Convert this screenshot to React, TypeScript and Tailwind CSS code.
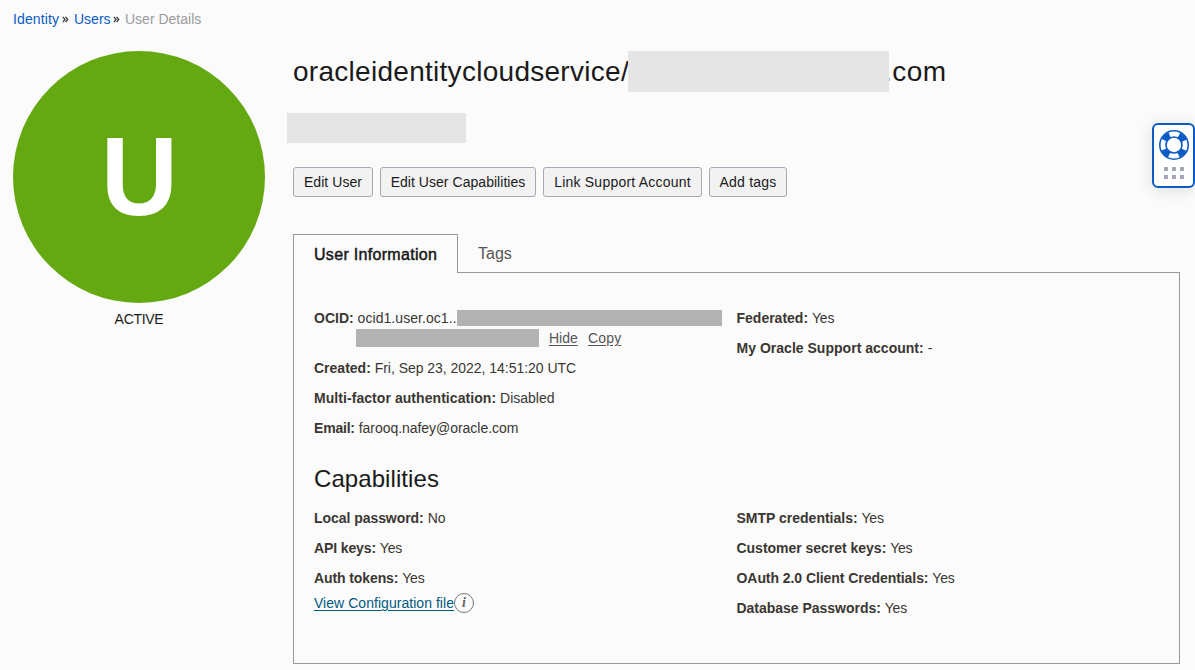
import type { ReactNode } from "react";

function Field({ label, track = "", valueTrack = "", children }: { label: string; track?: string; valueTrack?: string; children: ReactNode }) {
  return (
    <div className="h-5 whitespace-nowrap">
      <span className={"font-bold text-[#3a3632] " + track}>{label}:</span> <span className={valueTrack}>{children}</span>
    </div>
  );
}

function ActionButton({ size, children }: { size: string; children: ReactNode }) {
  return (
    <button className={"h-[30px] shrink-0 whitespace-nowrap rounded-[3px] border border-[#a3aab5] bg-[#f2f2f2] text-center text-sm leading-7 text-[#1a1a1a] " + size}>
      {children}
    </button>
  );
}

function Chevrons() {
  return (
    <svg width="7" height="7" viewBox="0 0 7 7" fill="none" stroke="#444" strokeWidth="1.4" className="shrink-0">
      <path d="M.9 .9 3 3.5.9 6.1M3.6 .9 5.7 3.5 3.6 6.1" />
    </svg>
  );
}

function Lifebuoy() {
  return (
    <svg width="32" height="32" viewBox="0 0 32 32" fill="none">
      <g stroke="#0b5cc4">
        <circle cx="16" cy="16" r="11" strokeWidth="6" strokeDasharray="7.6 9.679" strokeDashoffset="-4.84" />
        <circle cx="16" cy="16" r="14.2" strokeWidth="1.6" />
        <circle cx="16" cy="16" r="8" strokeWidth="1.6" />
      </g>
    </svg>
  );
}

function SupportWidget() {
  return (
    <aside className="absolute right-0 top-[123px] flex h-[65px] w-[43px] flex-col items-center rounded-[6px] border-2 border-[#0b5cc4] bg-white pt-1 shadow-[0_2px_16px_rgba(0,0,0,0.12)]">
      <Lifebuoy />
      <div className="mt-[6px] grid grid-cols-3 gap-1">
        {[0, 1, 2, 3, 4, 5].map((n) => (
          <span key={n} className="h-1 w-1 bg-[#a2a8b4]" />
        ))}
      </div>
    </aside>
  );
}

export default function App() {
  return (
    <div className="relative h-[670px] w-[1195px] overflow-hidden bg-[#fbfbfb] font-['Liberation_Sans',sans-serif] text-sm leading-5 text-[#3a3632]">
      <nav className="flex h-[51px] items-start whitespace-nowrap pl-[13px] pt-[9px]">
        <a className="w-[49px] tracking-[0.13px] text-[#0b5cc4]">Identity</a>
        <span className="flex h-5 w-3 items-center"><Chevrons /></span>
        <a className="w-[39px] text-[#0b5cc4]">Users</a>
        <span className="flex h-5 w-3 items-center"><Chevrons /></span>
        <span className="text-[#9b9b9b]">User Details</span>
      </nav>
      <div className="flex pl-[13px]">
        <aside className="flex w-[280px] flex-col">
          <div className="flex h-[252px] w-[252px] items-center justify-center rounded-full bg-[#65a912]">
            <span className="scale-x-[0.95] text-[112px] font-bold leading-none text-white">U</span>
          </div>
          <div className="mt-[6px] w-[252px] text-center tracking-[-0.3px] text-[#1a1a1a]">ACTIVE</div>
        </aside>
        <main className="w-[887px]">
          <h1 className="flex h-[41px] items-center whitespace-nowrap text-[28px] leading-[41px] text-[#1a1a1a]">
            <span className="w-[335px] tracking-[0.28px]">oracleidentitycloudservice/</span>
            <span className="relative z-10 h-[41px] w-[261px] bg-[#e5e5e5]" />
            <span className="-ml-[5px] tracking-[0.5px]">.com</span>
          </h1>
          <div className="-ml-[6px] mt-[21px] h-[30px] w-[179px] bg-[#e5e5e5]" />
          <div className="mt-6 flex gap-[7px]">
            <ActionButton size="w-[80px] tracking-[0.07px]">Edit User</ActionButton>
            <ActionButton size="w-[156px] tracking-[0.04px]">Edit User Capabilities</ActionButton>
            <ActionButton size="w-[159px] tracking-[0.22px]">Link Support Account</ActionButton>
            <ActionButton size="w-[78px] tracking-[0.2px]">Add tags</ActionButton>
          </div>
          <div className="mt-[37px] flex h-[39px] text-base">
            <div className="z-10 h-[39px] w-[165px] whitespace-nowrap border border-b-0 border-[#989898] bg-[#fbfbfb] pl-5 leading-[39px] tracking-[0.31px] text-[#161616] [-webkit-text-stroke:0.45px_#161616]">User Information</div>
            <div className="pl-5 leading-[39px] text-[#555]">Tags</div>
          </div>
          <section className="-mt-px h-[392px] border border-[#989898] px-5 pt-[35px]">
            <div className="flex">
              <div className="flex w-[422px] flex-col gap-[10px]">
                <div>
                  <div className="flex h-5 items-center whitespace-nowrap">
                    <span className="w-[143px]"><b>OCID:</b> <span className="tracking-[0.06px]">ocid1.user.oc1..</span></span>
                    <span className="h-4 w-[265px] bg-[#b2b2b2]" />
                  </div>
                  <div className="flex h-5 items-center pl-[42px] text-[#555]">
                    <span className="h-[18px] w-[183px] bg-[#b2b2b2]" />
                    <a className="ml-[10px] w-[39px] underline underline-offset-2">Hide</a>
                    <a className="tracking-[0.15px] underline underline-offset-2">Copy</a>
                  </div>
                </div>
                <Field label="Created" valueTrack="tracking-[-0.03px]">Fri, Sep 23, 2022, 14:51:20 UTC</Field>
                <Field label="Multi-factor authentication" track="tracking-[0.06px]">Disabled</Field>
                <Field label="Email" track="tracking-[-0.2px]" valueTrack="tracking-[-0.04px]">farooq.nafey@oracle.com</Field>
              </div>
              <div className="flex flex-col gap-[10px] pl-[0.5px]">
                <Field label="Federated" valueTrack="tracking-[-0.2px]">Yes</Field>
                <Field label="My Oracle Support account" track="tracking-[0.02px]">-</Field>
              </div>
            </div>
            <h2 className="mt-[26px] h-[30px] text-2xl leading-[30px] tracking-[0.08px] text-[#1a1a1a]">Capabilities</h2>
            <div className="mt-[14px] flex">
              <div className="flex w-[422px] flex-col gap-[10px]">
                <Field label="Local password" track="tracking-[-0.05px]">No</Field>
                <Field label="API keys" track="tracking-[-0.12px]" valueTrack="tracking-[-0.2px]">Yes</Field>
                <Field label="Auth tokens" track="tracking-[-0.1px]" valueTrack="tracking-[-0.2px]">Yes</Field>
                <div className="-mt-[5px] flex h-5 items-center">
                  <a className="w-[140px] whitespace-nowrap tracking-[0.04px] text-[#00597f] underline underline-offset-2">View Configuration file</a>
                  <span className="flex h-5 w-5 items-center justify-center rounded-full border border-[#777] font-['Liberation_Serif',serif] text-[14px] font-bold italic leading-none text-[#666]">i</span>
                </div>
              </div>
              <div className="flex flex-col gap-[10px] pl-[0.5px]">
                <Field label="SMTP credentials" valueTrack="tracking-[-0.2px]">Yes</Field>
                <Field label="Customer secret keys" track="tracking-[-0.02px]" valueTrack="tracking-[-0.2px]">Yes</Field>
                <Field label="OAuth 2.0 Client Credentials" track="tracking-[-0.06px]" valueTrack="tracking-[-0.2px]">Yes</Field>
                <Field label="Database Passwords" track="tracking-[-0.02px]" valueTrack="tracking-[-0.2px]">Yes</Field>
              </div>
            </div>
          </section>
        </main>
      </div>
      <SupportWidget />
    </div>
  );
}
